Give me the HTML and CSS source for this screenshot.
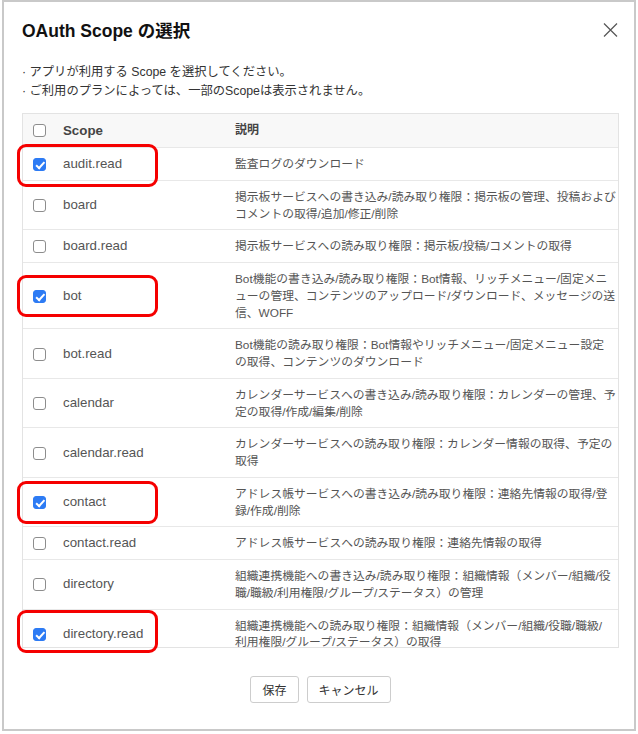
FILE: index.html
```html
<!DOCTYPE html>
<html lang="ja">
<head>
<meta charset="utf-8">
<title>OAuth Scope の選択</title>
<link rel="stylesheet" href="styles.css">
</head>
<body>
<section class="dialog">
  <header class="dialog-head">
    <h1 class="dialog-title">OAuth Scope の選択</h1>
    <button class="close" type="button" aria-label="閉じる">
      <svg width="15" height="14" viewBox="0 0 15 14"><path d="M1 0.5L14 13.5M14 0.5L1 13.5" stroke="#555" stroke-width="1.2" fill="none"/></svg>
    </button>
  </header>

  <ul class="notes">
    <li>· アプリが利用する Scope を選択してください。</li>
    <li>· ご利用のプランによっては、一部のScopeは表示されません。</li>
  </ul>

  <div class="scope-list">
    <table class="scope-table">
      <colgroup>
        <col class="col-check">
        <col class="col-scope">
        <col class="col-desc">
      </colgroup>
      <thead>
        <tr>
          <th class="cell-check"><input type="checkbox" class="chk"></th>
          <th class="cell-scope">Scope</th>
          <th class="cell-desc">説明</th>
        </tr>
      </thead>
      <tbody>
        <tr>
          <td class="cell-check"><input type="checkbox" class="chk" checked></td>
          <td class="cell-scope">audit.read</td>
          <td class="cell-desc">監査ログのダウンロード</td>
        </tr>
        <tr>
          <td class="cell-check"><input type="checkbox" class="chk"></td>
          <td class="cell-scope">board</td>
          <td class="cell-desc">掲示板サービスへの書き込み/読み取り権限：掲示板の管理、投稿および<br>コメントの取得/追加/修正/削除</td>
        </tr>
        <tr>
          <td class="cell-check"><input type="checkbox" class="chk"></td>
          <td class="cell-scope">board.read</td>
          <td class="cell-desc">掲示板サービスへの読み取り権限：掲示板/投稿/コメントの取得</td>
        </tr>
        <tr>
          <td class="cell-check"><input type="checkbox" class="chk" checked></td>
          <td class="cell-scope">bot</td>
          <td class="cell-desc">Bot機能の書き込み/読み取り権限：Bot情報、リッチメニュー/固定メニ<br>ューの管理、コンテンツのアップロード/ダウンロード、メッセージの送<br>信、WOFF</td>
        </tr>
        <tr>
          <td class="cell-check"><input type="checkbox" class="chk"></td>
          <td class="cell-scope">bot.read</td>
          <td class="cell-desc">Bot機能の読み取り権限：Bot情報やリッチメニュー/固定メニュー設定<br>の取得、コンテンツのダウンロード</td>
        </tr>
        <tr>
          <td class="cell-check"><input type="checkbox" class="chk"></td>
          <td class="cell-scope">calendar</td>
          <td class="cell-desc">カレンダーサービスへの書き込み/読み取り権限：カレンダーの管理、予<br>定の取得/作成/編集/削除</td>
        </tr>
        <tr>
          <td class="cell-check"><input type="checkbox" class="chk"></td>
          <td class="cell-scope">calendar.read</td>
          <td class="cell-desc">カレンダーサービスへの読み取り権限：カレンダー情報の取得、予定の<br>取得</td>
        </tr>
        <tr>
          <td class="cell-check"><input type="checkbox" class="chk" checked></td>
          <td class="cell-scope">contact</td>
          <td class="cell-desc">アドレス帳サービスへの書き込み/読み取り権限：連絡先情報の取得/登<br>録/作成/削除</td>
        </tr>
        <tr>
          <td class="cell-check"><input type="checkbox" class="chk"></td>
          <td class="cell-scope">contact.read</td>
          <td class="cell-desc">アドレス帳サービスへの読み取り権限：連絡先情報の取得</td>
        </tr>
        <tr>
          <td class="cell-check"><input type="checkbox" class="chk"></td>
          <td class="cell-scope">directory</td>
          <td class="cell-desc">組織連携機能への書き込み/読み取り権限：組織情報（メンバー/組織/役<br>職/職級/利用権限/グループ/ステータス）の管理</td>
        </tr>
        <tr>
          <td class="cell-check"><input type="checkbox" class="chk" checked></td>
          <td class="cell-scope">directory.read</td>
          <td class="cell-desc">組織連携機能への読み取り権限：組織情報（メンバー/組織/役職/職級/<br>利用権限/グループ/ステータス）の取得</td>
        </tr>
      </tbody>
    </table>
  </div>

  <footer class="actions">
    <button class="btn" type="button">保存</button>
    <button class="btn" type="button">キャンセル</button>
  </footer>

  <!-- annotation marks drawn over the list -->
  <span class="mark mark-audit"></span>
  <span class="mark mark-bot"></span>
  <span class="mark mark-contact"></span>
  <span class="mark mark-directory"></span>
</section>
</body>
</html>
```

FILE: styles.css
```css
body {
  margin: 0;
  background: #fff;
  font-family: "Liberation Sans", "Noto Sans CJK JP", sans-serif;
  color: #333;
}

.dialog {
  position: relative;
  box-sizing: border-box;
  width: 634px;
  height: 731px;
  margin-left: 2px;
  padding: 17px 15px 0 18px;
  border: 2px solid #c9c9c9;
  background: #fff;
}

.dialog-head {
  display: flex;
  justify-content: space-between;
  align-items: flex-start;
}

.dialog-title {
  margin: 0;
  font-size: 17.5px;
  line-height: 24px;
  font-weight: bold;
  color: #111;
}

.close {
  margin: 4px 1px 0 0;
  padding: 0;
  border: 0;
  background: none;
  line-height: 0;
}

.notes {
  margin: 20px 0 0;
  padding: 0;
  list-style: none;
  font-size: 12.3px;
  line-height: 19px;
  color: #333;
}

.scope-list {
  box-sizing: border-box;
  height: 535px;
  margin-top: 12px;
  border: 1px solid #e3e3e3;
  overflow: hidden;
}

.scope-table {
  width: 100%;
  table-layout: fixed;
  border-collapse: collapse;
}

.col-check { width: 30px; }
.col-scope { width: 170px; }

.scope-table th,
.scope-table td {
  padding: 8px 0 7px;
  line-height: 16.75px;
  border-bottom: 1px solid #e8e8e8;
  text-align: left;
}

.scope-table th {
  padding-bottom: 8px;
  line-height: 17px;
  background: #f8f8f8;
  font-weight: bold;
  color: #444;
}

.cell-check {
  padding-left: 10px !important;
  vertical-align: middle;
  line-height: 0 !important;
}

.cell-scope {
  padding-left: 10px !important;
  vertical-align: middle;
  font-size: 13.3px;
  color: #555;
}

th.cell-scope { color: #444; }

.cell-desc {
  padding-left: 12px !important;
  vertical-align: top;
  font-size: 11.8px;
  color: #555;
  white-space: nowrap;
}

th.cell-desc {
  font-size: 12px;
  vertical-align: middle;
}

.chk {
  -webkit-appearance: none;
  appearance: none;
  position: relative;
  box-sizing: border-box;
  width: 13px;
  height: 13px;
  margin: 0;
  border: 1px solid #8d8d8d;
  border-radius: 3px;
  background: #fff;
  vertical-align: middle;
}

.chk:checked {
  border-color: #2d7bf4;
  background: #2d7bf4;
}

.chk:checked::after {
  content: "";
  position: absolute;
  left: 3.5px;
  top: 1px;
  width: 3px;
  height: 6.5px;
  border: solid #fff;
  border-width: 0 2px 2px 0;
  transform: rotate(42deg);
}

.actions {
  display: flex;
  justify-content: center;
  gap: 8px;
  margin-top: 28px;
}

.btn {
  height: 27px;
  padding: 0 11px;
  border: 1px solid #cdcdcd;
  border-radius: 3px;
  background: #fff;
  font-family: inherit;
  font-size: 12px;
  color: #333;
}

.mark {
  position: absolute;
  left: 13px;
  box-sizing: border-box;
  width: 141px;
  height: 43px;
  border: 3.5px solid #f50000;
  border-radius: 9px;
}

.mark-audit { top: 142px; }
.mark-bot { top: 273px; height: 42px; }
.mark-contact { top: 479px; }
.mark-directory { top: 608px; }
```
